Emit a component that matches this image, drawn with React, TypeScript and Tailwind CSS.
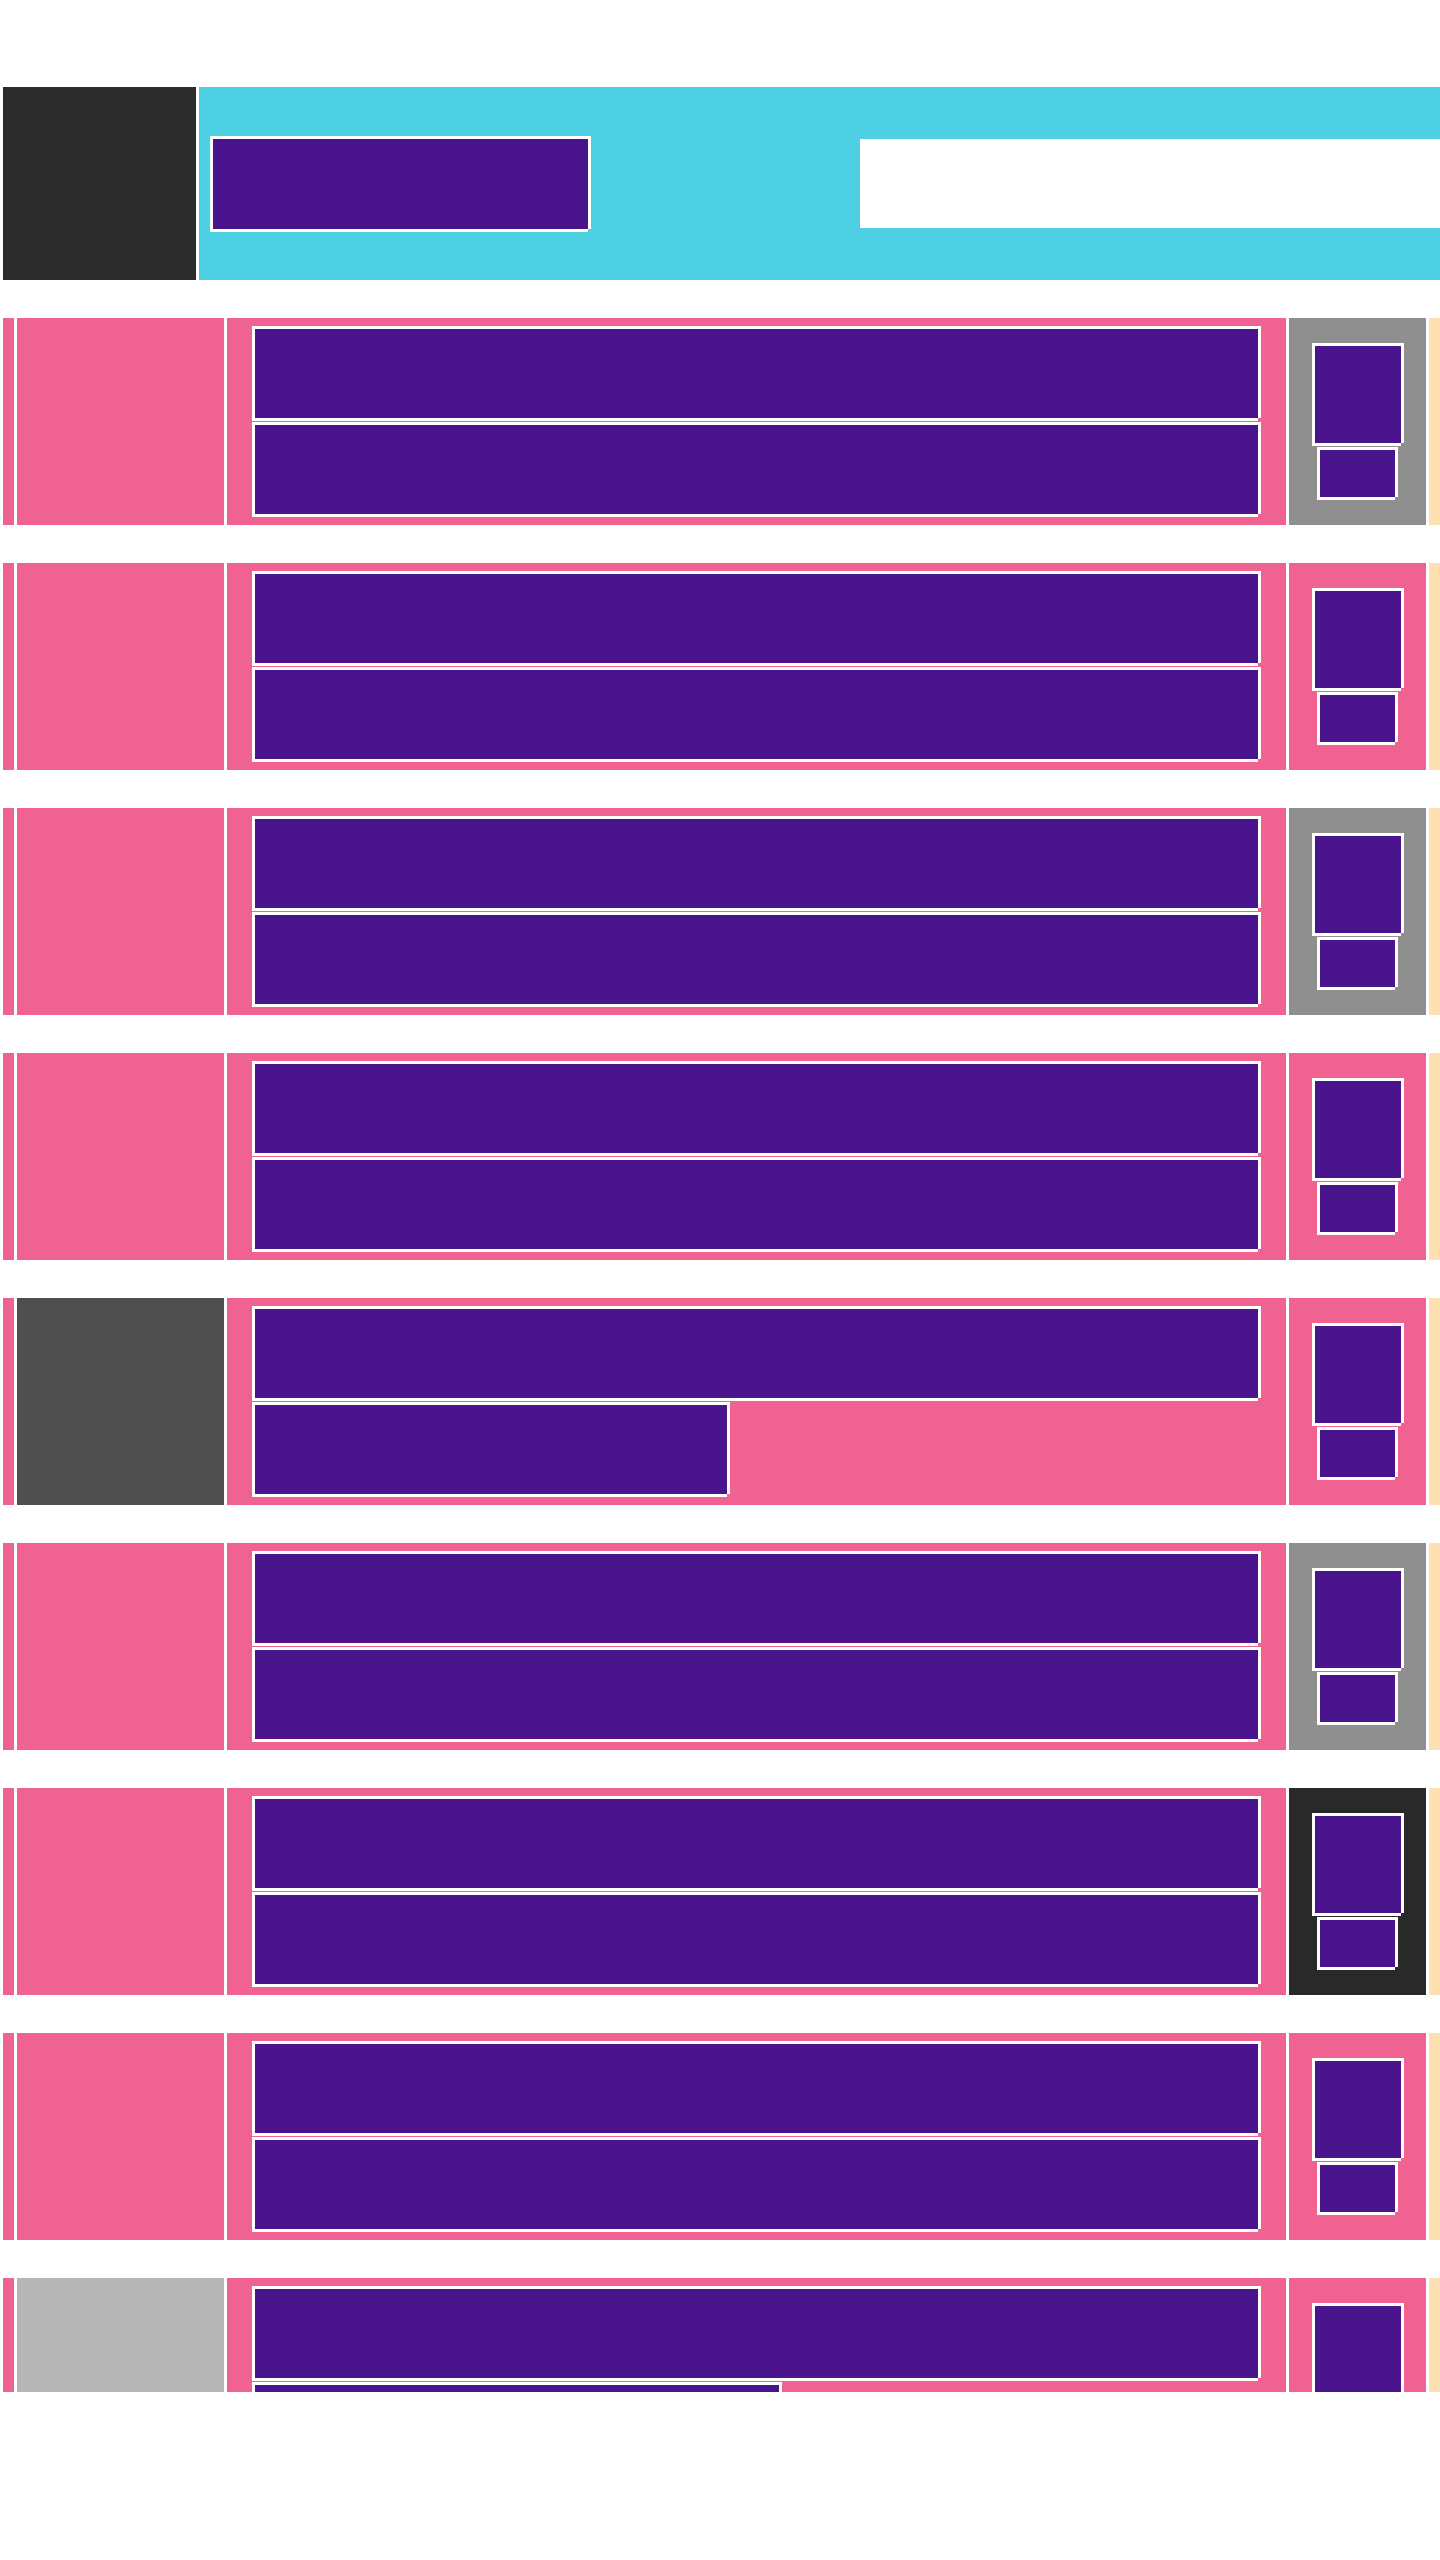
import React from 'react'

// notched white frame drawn with shadows, bottom-right corner left open
const frame =
  'shadow-[-3px_-3px_0_0_#ffffff,3px_-3px_0_0_#ffffff,-3px_3px_0_0_#ffffff,3px_0_0_0_#ffffff,0_3px_0_0_#ffffff]'

type Row = { left: string; right: string; second: string }

const rows: Row[] = [
  { left: 'bg-[#f06292]', right: 'bg-[#8f8f8f]', second: 'w-[1003px]' },
  { left: 'bg-[#f06292]', right: 'bg-[#f06292]', second: 'w-[1003px]' },
  { left: 'bg-[#f06292]', right: 'bg-[#8f8f8f]', second: 'w-[1003px]' },
  { left: 'bg-[#f06292]', right: 'bg-[#f06292]', second: 'w-[1003px]' },
  { left: 'bg-[#4f4f4f]', right: 'bg-[#f06292]', second: 'w-[472px]' },
  { left: 'bg-[#f06292]', right: 'bg-[#8f8f8f]', second: 'w-[1003px]' },
  { left: 'bg-[#f06292]', right: 'bg-[#292929]', second: 'w-[1003px]' },
  { left: 'bg-[#f06292]', right: 'bg-[#f06292]', second: 'w-[1003px]' },
  { left: 'bg-[#b6b6b6]', right: 'bg-[#f06292]', second: 'w-[524px]' },
]

function ListRow({ left, right, second }: Row) {
  return (
    <div className="flex h-[207px] shrink-0 gap-[3px] pl-[3px]">
      {/* edge strip */}
      <div className="w-[11px] shrink-0 bg-[#f06292]" />

      {/* thumbnail */}
      <div className={`w-[207px] shrink-0 ${left}`} />

      {/* title + subtitle */}
      <div className="flex w-[1059px] shrink-0 flex-col gap-[7px] bg-[#f06292] px-[28px] py-[11px]">
        <div className={`h-[89px] w-[1003px] bg-[#4a148c] ${frame}`} />
        <div className={`h-[89px] bg-[#4a148c] ${second} ${frame}`} />
      </div>

      {/* meta */}
      <div className={`flex w-[137px] shrink-0 flex-col items-center gap-[7px] py-[28px] ${right}`}>
        <div className={`h-[97px] w-[86px] bg-[#4a148c] ${frame}`} />
        <div className={`h-[47px] w-[75px] bg-[#4a148c] ${frame}`} />
      </div>

      <div className="w-[11px] shrink-0 bg-[#ffe0b2]" />
    </div>
  )
}

export default function App() {
  return (
    <div className="h-[2560px] w-[1440px] overflow-hidden bg-white pt-[87px]">
      {/* Header */}
      <header className="flex h-[193px] gap-[3px] pl-[3px]">
        <div className="w-[193px] shrink-0 bg-[#2b2b2b]" />
        <div className="flex min-w-0 flex-1 items-center bg-[#4dd0e1] pl-[14px]">
          <div className={`h-[90px] w-[375px] shrink-0 bg-[#4a148c] ${frame}`} />
          <div className="ml-auto h-[89px] w-[580px] shrink-0 bg-white" />
        </div>
      </header>

      {/* List */}
      <main className="flex h-[2112px] flex-col gap-[38px] overflow-hidden pt-[38px]">
        {rows.map((r, i) => (
          <ListRow key={i} {...r} />
        ))}
      </main>
    </div>
  )
}
